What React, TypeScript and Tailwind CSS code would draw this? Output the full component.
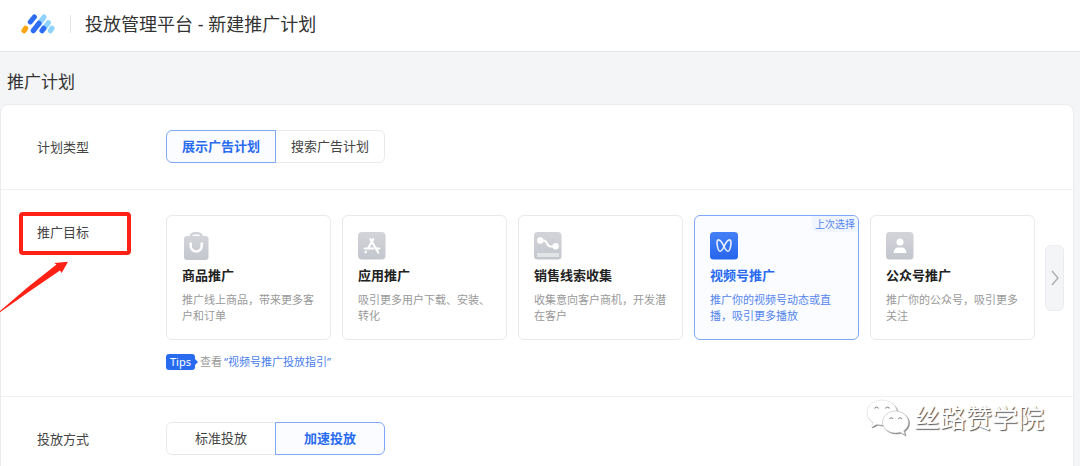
import { useState, type ReactNode } from "react";
import clsx from "clsx";

function Logo() {
  return (
    <svg viewBox="33 25 102 60" className="h-5 w-[34px]" fill="none" strokeWidth="15.5" strokeLinecap="round" aria-hidden="true">
      <path d="M42 75L47 68" stroke="#ffa60f" />
      <path d="M86 56L102 34" stroke="#8ed2ff" />
      <path d="M102 69L115 51" stroke="#8ed2ff" />
      <path d="M121 75L126 68" stroke="#8ed2ff" />
      <path d="M61 49L73 34" stroke="#2d6cf3" />
      <path d="M70 75L87 53" stroke="#2d6cf3" />
      <path d="M96 75L101 68" stroke="#2d6cf3" />
    </svg>
  );
}

function GreyFill({ id }: { id: string }) {
  return (
    <defs>
      <linearGradient id={id} x1="0" y1="0" x2="0" y2="1">
        <stop offset="0" stopColor="#d2d4d9" />
        <stop offset="1" stopColor="#c3c6cc" />
      </linearGradient>
    </defs>
  );
}

function BagIcon() {
  return (
    <svg viewBox="0 0 28 28" className="size-7" aria-hidden="true">
      <GreyFill id="bag" />
      <path d="M8.500 6C8.500 2.800 10.500 1.200 12.500 1.200H16C18 1.200 20 2.800 20 6" fill="none" stroke="#cfd1d6" strokeWidth="2.400" />
      <rect x="2" y="4" width="24.500" height="24" rx="3" fill="url(#bag)" />
      <path d="M8.700 10.500v3.500a5.500 5.500 0 0 0 11 0v-3.500" fill="none" stroke="#fff" strokeWidth="2.400" />
    </svg>
  );
}

function AppIcon() {
  return (
    <svg viewBox="0 0 28 28" className="size-7" aria-hidden="true">
      <GreyFill id="app" />
      <rect width="27.500" height="27.500" rx="4" fill="url(#app)" />
      <g stroke="#fff" strokeWidth="2.200" strokeLinecap="round" fill="none">
        <path d="M12.400 7.200L19.200 18.900M15.200 7.200L10 16.500M8 19.600L7.600 20.300M6.600 16.500H15M18.700 16.500H21.200M20 20.200L20.200 20.500" />
      </g>
    </svg>
  );
}

function LeadIcon() {
  return (
    <svg viewBox="0 0 28 28" className="size-7" aria-hidden="true">
      <GreyFill id="lead" />
      <rect width="27.500" height="27.500" rx="3.500" fill="url(#lead)" />
      <path d="M6.500 8.500H9.500C13.500 8.500 12.500 14.500 16.500 14.500H21.500" fill="none" stroke="#fff" strokeWidth="2" />
      <circle cx="6.300" cy="8.500" r="3.200" fill="#fff" />
      <circle cx="21.700" cy="14.300" r="3.200" fill="#fff" />
      <rect x="3" y="21" width="22" height="4" fill="#e3e4e8" />
    </svg>
  );
}

function ChannelIcon() {
  return (
    <svg viewBox="0 0 28 28" className="size-7" aria-hidden="true">
      <defs>
        <linearGradient id="channel" x1="0" y1="0" x2="0" y2="1">
          <stop offset="0" stopColor="#4480f6" />
          <stop offset="1" stopColor="#2666ee" />
        </linearGradient>
      </defs>
      <rect width="28" height="27.500" rx="3.500" fill="url(#channel)" />
      <path
        d="M14 14.600C12.500 11.300 10.400 7.900 8.500 7.900C6.900 7.900 6.800 10.300 7.200 13C7.700 16.600 8.800 19.200 10.200 19.200C11.700 19.200 12.900 16.700 14 14.600C15.500 11.300 17.600 7.900 19.500 7.900C21.100 7.900 21.200 10.300 20.800 13C20.300 16.600 19.200 19.200 17.800 19.200C16.300 19.200 15.100 16.700 14 14.600Z"
        fill="none"
        stroke="#e8f0ff"
        strokeWidth="1.600"
      />
    </svg>
  );
}

function AccountIcon() {
  return (
    <svg viewBox="0 0 28 28" className="size-7" aria-hidden="true">
      <GreyFill id="account" />
      <rect width="27.500" height="27.500" rx="3.500" fill="url(#account)" />
      <circle cx="14" cy="10" r="3.500" fill="#fff" />
      <path d="M7.700 21C7.700 17.500 9.700 15.500 12.200 15.500H15.800C18.300 15.500 20.300 17.500 20.300 21Z" fill="#fff" />
    </svg>
  );
}

const goals: { title: string; text: string; icon: ReactNode; last?: boolean }[] = [
  { title: "商品推广", text: "推广线上商品，带来更多客户和订单", icon: <BagIcon /> },
  { title: "应用推广", text: "吸引更多用户下载、安装、转化", icon: <AppIcon /> },
  { title: "销售线索收集", text: "收集意向客户商机，开发潜在客户", icon: <LeadIcon /> },
  { title: "视频号推广", text: "推广你的视频号动态或直播，吸引更多播放", icon: <ChannelIcon />, last: true },
  { title: "公众号推广", text: "推广你的公众号，吸引更多关注", icon: <AccountIcon /> },
];

function Segmented({ label, options, initial }: { label: string; options: string[]; initial: number }) {
  const [active, setActive] = useState(initial);
  return (
    <div role="group" aria-label={label} className="flex">
      {options.map((option, i) => (
        <button
          key={option}
          type="button"
          aria-pressed={i === active}
          onClick={() => setActive(i)}
          className={clsx(
            "h-[33px] w-[110px] border text-[13px] first:rounded-l-md last:-ml-px last:rounded-r-md",
            i === active
              ? "z-10 border-[#7fa8f8] bg-[#fafcff] font-bold text-[#296bef]"
              : "border-[#e8e9ec] bg-white text-[#444]",
          )}
        >
          {option}
        </button>
      ))}
    </div>
  );
}

function Row({ label, className, marked, children }: { label: string; className: string; marked?: boolean; children: ReactNode }) {
  return (
    <section className={clsx("flex items-start pl-9", className)}>
      <h3 className="relative w-[129px] shrink-0 py-2 text-[13px] leading-[18px] text-[#444]">
        {label}
        {marked && <Annotation />}
      </h3>
      {children}
    </section>
  );
}

function Annotation() {
  return (
    <>
      <span className="absolute -left-[18px] -top-[3px] h-[43px] w-28 rounded-[4px] border-4 border-[#ff2116]" />
      <svg viewBox="0 0 70 52" className="absolute -left-[37px] top-[46px] h-[52px] w-[70px]" aria-hidden="true">
        <path d="M0 50L28 26L56.500 3.500L54.300 2L68 .7L61.700 12L60 9.500L30 30L0 51.300Z" fill="#ff2116" />
      </svg>
    </>
  );
}

function Watermark() {
  return (
    <div className="absolute bottom-[30px] right-9 flex items-center gap-1">
      <svg viewBox="0 0 44 37" className="h-[37px] w-11 drop-shadow-[1px_1px_0px_#888]" aria-hidden="true">
        <path d="M16 1C7.500 1 1 6.500 1 13.500C1 17.500 3.200 21 7 23.400L5.500 28L11 25.200C12.600 25.700 14.300 26 16 26C24.500 26 31 20.500 31 13.500S24.500 1 16 1Z" fill="#fff" stroke="#ddd" strokeWidth=".6" />
        <path d="M29.500 12C22.500 12 16.500 17 16.500 23.200S22.500 34 29.500 34C31.200 34 32.800 33.700 34.200 33.200L39 36L37.800 31.700C40.900 29.700 42.500 26.600 42.500 23.200C42.500 17 36.500 12 29.500 12Z" fill="#fff" stroke="#bbb" strokeWidth=".6" />
        <g fill="none" stroke="#888" strokeWidth="1.200">
          <path d="M8.500 9.500Q10.500 6.500 12.500 9.500M19.500 9.500Q21.500 6.500 23.500 9.500M23.500 20Q25.200 17.500 27 20M32.500 20Q34.200 17.500 36 20" />
        </g>
      </svg>
      <span className="text-[26px] leading-9 text-white [text-shadow:1px_1px_1px_#555]">丝路赞学院</span>
    </div>
  );
}

export default function App() {
  const [goal, setGoal] = useState(3);
  return (
    <div className="relative flex min-h-screen flex-col bg-[#f4f5f7] font-['Noto_Sans','Noto_Sans_CJK_SC',sans-serif]">
      <header className="flex h-[52px] items-center border-b border-[#e6e7ea] bg-white pb-1 pl-[21px]">
        <Logo />
        <span className="ml-[15px] h-[18px] w-px bg-[#e4e5e8]" />
        <h1 className="ml-3.5 text-lg text-[#333]">投放管理平台 - 新建推广计划</h1>
      </header>
      <h2 className="pb-[10px] pl-[7px] pt-[18px] text-[17px] leading-6 text-[#333]">推广计划</h2>
      <main className="mr-1.5 flex-1 rounded-t-lg border border-b-0 border-[#ebecf0] bg-white">
        <Row label="计划类型" className="border-b border-[#f0f1f3] py-[25px]">
          <Segmented label="计划类型" options={["展示广告计划", "搜索广告计划"]} initial={0} />
        </Row>
        <Row label="推广目标" marked className="border-b border-[#f0f1f3] pb-[26px] pr-[9px] pt-[25px]">
          <div className="min-w-0 flex-1">
            <div className="flex items-center gap-2.5">
              <div className="grid flex-1 grid-cols-5 gap-[11px]">
                {goals.map((g, i) => {
                  const on = i === goal;
                  return (
                    <button
                      key={g.title}
                      type="button"
                      aria-pressed={on}
                      onClick={() => setGoal(i)}
                      className={clsx(
                        "relative flex flex-col items-start rounded-md border px-[15px] pb-[15px] pt-4 text-left",
                        on ? "border-[#7fa8f8] bg-[#fafcff]" : "border-[#e8e9ec] bg-white",
                      )}
                    >
                      {g.last && (
                        <span className="absolute right-0 top-0 rounded-bl-md rounded-tr-md bg-[#f1f6fe] px-[3px] text-[10px] leading-4 text-[#5585ee]">
                          上次选择
                        </span>
                      )}
                      {g.icon}
                      <span className={clsx("mt-[5px] text-[13px] font-bold leading-5", on ? "text-[#296bef]" : "text-[#222]")}>{g.title}</span>
                      <span className={clsx("mt-[7px] text-[11px] leading-4", on ? "text-[#5585ee]" : "text-[#999]")}>{g.text}</span>
                    </button>
                  );
                })}
              </div>
              <button
                type="button"
                aria-label="下一页"
                className="flex h-[66px] w-[19px] items-center justify-center rounded-md border border-[#ebecef] bg-[#f4f5f7]"
              >
                <svg viewBox="0 0 8 16" className="h-4 w-2" fill="none" stroke="#aaa" strokeWidth="1.300" aria-hidden="true">
                  <path d="M1 1L7 8L1 15" />
                </svg>
              </button>
            </div>
            <p className="mt-3.5 flex h-4 items-center text-[11px] leading-4 text-[#999]">
              <span className="rounded-[3px] bg-[#296bef] px-1 text-white">Tips</span>
              <svg viewBox="0 0 3 6" className="h-1.5 w-[3px]" aria-hidden="true">
                <path d="M0 0L3 3L0 6Z" fill="#296bef" />
              </svg>
              <span className="ml-0.5">查看</span>
              <a href="#guide" className="ml-0.5 text-[#4a7df0]">“视频号推广投放指引”</a>
            </p>
          </div>
        </Row>
        <Row label="投放方式" className="pb-2 pt-[25px]">
          <Segmented label="投放方式" options={["标准投放", "加速投放"]} initial={1} />
        </Row>
      </main>
      <Watermark />
    </div>
  );
}
